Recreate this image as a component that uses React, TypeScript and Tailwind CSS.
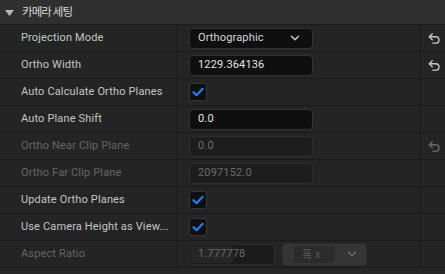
import React from 'react';
import { ChevronDown } from 'lucide-react';

type Row = {
  label: string;
  kind: 'combo' | 'input' | 'check' | 'aspect';
  value?: string;
  disabled?: boolean;
  reset?: boolean;
};

const rows: Row[] = [
  { label: 'Projection Mode', kind: 'combo', value: 'Orthographic', reset: true },
  { label: 'Ortho Width', kind: 'input', value: '1229.364136', reset: true },
  { label: 'Auto Calculate Ortho Planes', kind: 'check' },
  { label: 'Auto Plane Shift', kind: 'input', value: '0.0' },
  { label: 'Ortho Near Clip Plane', kind: 'input', value: '0.0', disabled: true, reset: true },
  { label: 'Ortho Far Clip Plane', kind: 'input', value: '2097152.0', disabled: true },
  { label: 'Update Ortho Planes', kind: 'check' },
  { label: 'Use Camera Height as View...', kind: 'check' },
  { label: 'Aspect Ratio', kind: 'aspect', value: '1.777778', disabled: true },
];

const ResetIcon = ({ dim }: { dim?: boolean }) => (
  <svg width="14" height="13" viewBox="0 0 24 22" fill="none" stroke={dim ? '#6a6a6a' : '#c4c4c4'} strokeWidth="2.4" strokeLinecap="round" strokeLinejoin="round">
    <path d="M9 13 4 8l5-5" />
    <path d="M4 8h11a5.5 5.5 0 0 1 0 11H10" />
  </svg>
);

const Check = () => (
  <div className="w-[18px] h-[18px] rounded-[3px] bg-[#0f0f0f] border border-[#353535] flex items-center justify-center">
    <svg width="12" height="10" viewBox="0 0 12 10" fill="none">
      <path d="M1.5 5.2 4.6 8.2 10.6 1.8" stroke="#1d7ff0" strokeWidth="2.2" strokeLinecap="round" strokeLinejoin="round" />
    </svg>
  </div>
);

const Value = ({ row }: { row: Row }) => {
  if (row.kind === 'check') return <Check />;
  if (row.kind === 'combo')
    return (
      <div className="w-[124px] h-[21px] rounded-[4px] bg-[#0f0f0f] border border-[#333333] flex items-center justify-between pl-[8px] pr-[10px] text-[#d6d6d6]">
        <span>{row.value}</span>
        <ChevronDown className="w-[14px] h-[14px] text-[#cfcfcf]" strokeWidth={2.4} />
      </div>
    );
  if (row.kind === 'aspect')
    return (
      <div className="flex items-center gap-[7px]">
        <div className="relative w-[86px] h-[21px] rounded-[4px] bg-[#1b1b1b] border border-[#2c2c2c] overflow-hidden flex items-center">
          <div className="absolute left-[1px] top-[1px] bottom-[1px] w-[42px] rounded-[3px] bg-[#262626]" />
          <span className="relative pl-[8px] text-[#6a6a6a]">{row.value}</span>
        </div>
        <div className="w-[85px] h-[23px] rounded-[4px] bg-[#353535] border border-[#2c2c2c] flex items-center pl-[11px] gap-[10px]">
          <div className="w-[41px] h-[17px] rounded-[4px] bg-[#2b2b2b] flex items-center pl-[8px] gap-[3px] text-[#5a5a5a]">
            <span className="text-[11px] [font-family:'Noto_Sans_CJK_KR',sans-serif]">폭</span>
            <span className="text-[10px]">x</span>
          </div>
          <ChevronDown className="w-[14px] h-[14px] text-[#6a6a6a]" strokeWidth={2.4} />
        </div>
      </div>
    );
  return (
    <div
      className={`w-[124px] h-[21px] rounded-[4px] border flex items-center pl-[8px] ${
        row.disabled ? 'bg-[#1d1d1d] border-[#2e2e2e] text-[#6a6a6a]' : 'bg-[#0f0f0f] border-[#333333] text-[#e2e2e2]'
      }`}
    >
      {row.value}
    </div>
  );
};

export default function App() {
  return (
    <div className="w-[445px] h-[274px] bg-[#242424] overflow-hidden text-[11px] tracking-[0.15px] [font-family:Roboto,'Noto_Sans_CJK_KR',sans-serif]">
      <div className="h-[25px] bg-[#2f2f2f] border-b border-[#1a1a1a] flex items-center">
        <svg width="9" height="6" viewBox="0 0 9 6" className="ml-[5px] mt-[1px]">
          <path d="M0 0h9L4.5 6z" fill="#b8b8b8" />
        </svg>
        <span className="ml-[8px] text-[11.5px] tracking-[-0.9px] text-[#d8d8d8] [font-family:'Noto_Sans_CJK_KR',sans-serif]">카메라 세팅</span>
      </div>
      {rows.map((row) => (
        <div key={row.label} className="h-[27px] flex border-b border-[#1a1a1a]">
          <div
            className={`w-[177px] border-r border-[#1a1a1a] flex items-center pl-[21px] ${
              row.disabled ? 'text-[#656565]' : 'text-[#c4c4c4]'
            }`}
          >
            {row.label}
          </div>
          <div className="w-[244px] border-r border-[#1a1a1a] flex items-center pl-[12px]">
            <Value row={row} />
          </div>
          <div className="flex-1 flex items-center justify-center pl-[1px]">
            {row.reset && <ResetIcon dim={row.disabled} />}
          </div>
        </div>
      ))}
      <div className="h-[6px] bg-[#262626]" />
    </div>
  );
}
